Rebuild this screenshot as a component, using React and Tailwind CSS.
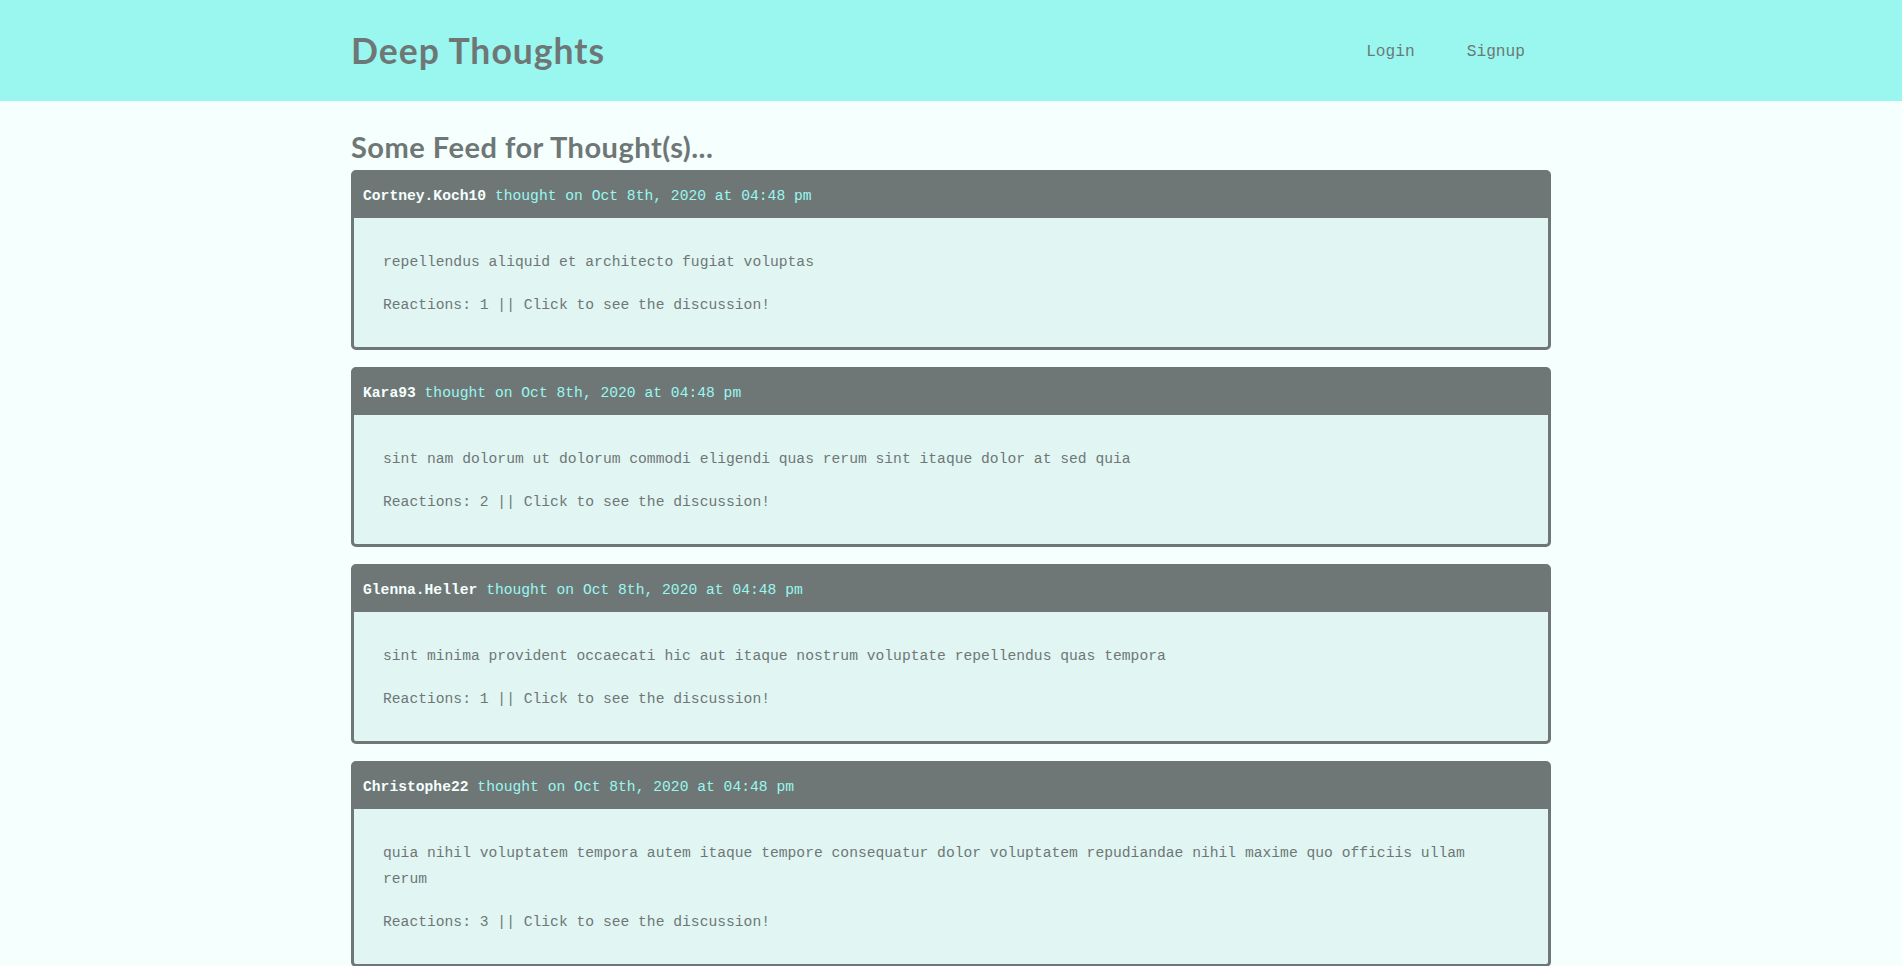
import React from "react";

const thoughts = [
  { user: "Cortney.Koch10", text: "repellendus aliquid et architecto fugiat voluptas", reactions: 1 },
  { user: "Kara93", text: "sint nam dolorum ut dolorum commodi eligendi quas rerum sint itaque dolor at sed quia", reactions: 2 },
  { user: "Glenna.Heller", text: "sint minima provident occaecati hic aut itaque nostrum voluptate repellendus quas tempora", reactions: 1 },
  { user: "Christophe22", text: "quia nihil voluptatem tempora autem itaque tempore consequatur dolor voluptatem repudiandae nihil maxime quo officiis ullam rerum", reactions: 3 },
  { user: "Hayley.Runte", text: "voluptatem quia dolores et eius consequatur aut", reactions: 2 },
];

const mono = { fontFamily: '"Liberation Mono", "DejaVu Sans Mono", monospace' };

export default function App() {
  return (
    <div className="min-h-screen bg-[#f5fffe] text-[#6e7776]" style={mono}>
      <header className="bg-[#99f7f0] h-[101px]">
        <div className="w-[1200px] mx-auto h-full flex items-center justify-between">
          <h1
            className="text-[35.5px] font-bold text-[#6e7776] leading-none tracking-[1px]"
            style={{ fontFamily: '"Lato", "Inter", sans-serif' }}
          >
            Deep Thoughts
          </h1>
          <nav className="flex items-center gap-[52px] pr-[26px] pt-[4px] text-[16.2px] text-[#6e7776]">
            <a className="cursor-pointer">Login</a>
            <a className="cursor-pointer">Signup</a>
          </nav>
        </div>
      </header>
      <main className="w-[1200px] mx-auto pt-[26px] pb-10">
        <h3
          className="text-[29px] font-bold leading-[40px] mb-[3px] text-[#6e7776] tracking-[0.5px]"
          style={{ fontFamily: '"Lato", "Inter", sans-serif' }}
        >
          Some Feed for Thought(s)...
        </h3>
        <div className="flex flex-col gap-[17px]">
          {thoughts.map((t) => (
            <div key={t.user} className="border-[3px] border-[#6e7776] rounded-[5px] bg-[#6e7776] overflow-hidden">
              <div className="h-[45px] flex items-center pl-[9px] pr-[6px] text-[14.67px]">
                <span className="font-bold text-[#f5fffe]">{t.user}</span>
                <span className="text-[#99f7f0]">&nbsp;thought on Oct 8th, 2020 at 04:48 pm</span>
              </div>
              <div className="bg-[#e1f5f3] pl-[29px] pr-[40px] pt-[31px] pb-[29px] text-[14.67px] leading-[26px]">
                <p>{t.text}</p>
                <p className="mt-[17px]">
                  Reactions: {t.reactions} || Click to see the discussion!
                </p>
              </div>
            </div>
          ))}
        </div>
      </main>
    </div>
  );
}
